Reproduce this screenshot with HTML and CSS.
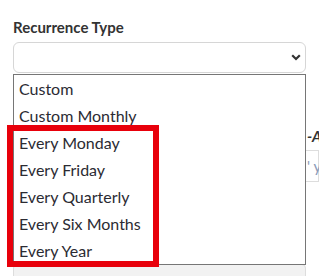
FILE: index.html
```html
<!DOCTYPE html>
<html lang="en">
<head>
  <meta charset="UTF-8" />
  <meta name="viewport" content="width=device-width, initial-scale=1.0"/>
  <title>Recurrence Type</title>
  <link rel="stylesheet" href="styles.css">
</head>
<body>
  <div class="page">
    <div class="field">
      <label class="label">Recurrence Type</label>
      <div class="select-wrap">
        <div class="select">
          <svg class="chevron" width="10" height="7" viewBox="0 0 10 7">
            <path d="M1.2 1.2 L5 5 L8.8 1.2" fill="none" stroke="#333" stroke-width="2.2"/>
          </svg>
        </div>

        <!-- open dropdown -->
        <ul class="options">
          <li>Custom</li>
          <li>Custom Monthly</li>
          <li>Every Monday</li>
          <li>Every Friday</li>
          <li>Every Quarterly</li>
          <li>Every Six Months</li>
          <li>Every Year</li>
        </ul>

        <!-- highlight annotation -->
        <div class="highlight"></div>
      </div>
    </div>

    <div class="row">
      <div class="left">
        <div class="input disabled"></div>
      </div>
      <div class="right">
        <div class="label side">-A</div>
        <div class="input"><span class="placeholder">' y</span></div>
      </div>
    </div>
  </div>
</body>
</html>
```

FILE: styles.css
```css
* { margin: 0; padding: 0; box-sizing: border-box; }
body {
  font-family: Lato, 'Open Sans', sans-serif;
  background: #fff;
  color: #333;
  overflow: hidden;
}
.page { padding: 18px 0 0 13px; width: 319px; height: 276px; overflow: hidden; }
.field { width: 293px; }
.label {
  display: block;
  font-size: 15px; font-weight: bold; line-height: 18px;
  color: #333;
  margin-bottom: 6px;
}
.select-wrap { position: relative; }
.select {
  height: 31px;
  border: 1px solid #d6d6d6; border-radius: 6px;
  display: flex; justify-content: flex-end; align-items: center;
  padding-right: 4px;
}
.options {
  position: absolute;
  top: 32px; left: 0;
  width: 293px;
  list-style: none;
  background: #fff;
  border: 1px solid #767676;
  z-index: 5;
}
.options li {
  font-size: 16px; line-height: 27px;
  padding-left: 5px;
  color: #2b2b33;
}
.highlight {
  position: absolute;
  left: -6px; top: 83px;
  width: 152px; height: 142px;
  border: 6px solid #e8000b;
  z-index: 6;
}
.row { display: flex; }
.left { width: 293px; flex: none; }
.right { flex: none; width: 13px; padding-top: 54px; white-space: nowrap; }
.label.side { margin-bottom: 5px; font-style: italic; padding-left: 1px; }
.input {
  height: 32px;
  border: 1px solid #ddd; border-radius: 4px;
  background: #fff;
  font-size: 15px; line-height: 30px;
}
.right .input { border-left: none; border-radius: 0; padding-left: 1px; }
.input.disabled { margin-top: 191px; height: 40px; background: #f2f2f2; }
.placeholder { color: #8a9ab8; }
```
